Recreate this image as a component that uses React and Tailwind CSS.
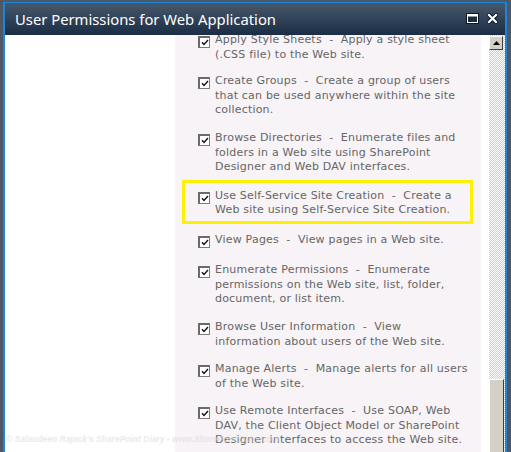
import React from "react";

const items = [
  { lines: ["Apply Style Sheets\u00a0\u00a0-\u00a0\u00a0Apply a style sheet", "(.CSS file) to the Web site."], mt: "mt-0" },
  { lines: ["Create Groups\u00a0\u00a0-\u00a0\u00a0Create a group of users", "that can be used anywhere within the site", "collection."], mt: "mt-[12px]" },
  { lines: ["Browse Directories\u00a0\u00a0-\u00a0\u00a0Enumerate files and", "folders in a Web site using SharePoint", "Designer and Web DAV interfaces."], mt: "mt-[13.5px]" },
  { lines: ["Use Self-Service Site Creation\u00a0\u00a0-\u00a0\u00a0Create a", "Web site using Self-Service Site Creation."], highlight: true },
  { lines: ["View Pages\u00a0\u00a0-\u00a0\u00a0View pages in a Web site."], mt: "mt-[9px]" },
  { lines: ["Enumerate Permissions\u00a0\u00a0-\u00a0\u00a0Enumerate", "permissions on the Web site, list, folder,", "document, or list item."], mt: "mt-[15.5px]" },
  { lines: ["Browse User Information\u00a0\u00a0-\u00a0\u00a0View", "information about users of the Web site."], mt: "mt-[13.5px]" },
  { lines: ["Manage Alerts\u00a0\u00a0-\u00a0\u00a0Manage alerts for all users", "of the Web site."], mt: "mt-[13px]" },
  { lines: ["Use Remote Interfaces\u00a0\u00a0-\u00a0\u00a0Use SOAP, Web", "DAV, the Client Object Model or SharePoint", "Designer interfaces to access the Web site."], mt: "mt-[13px]" },
];

function CheckBox() {
  return (
    <span className="mt-[3px] flex h-[12px] w-[12px] shrink-0 items-center justify-center border border-[#7c7c7c] border-l-2 border-t-2 border-l-[#6a6a6a] border-t-[#6a6a6a] bg-white">
      <svg width="8" height="7" viewBox="0 0 8 7">
        <path d="M1 3.2 L3 5.4 L7 1" fill="none" stroke="#111" strokeWidth="1.4" />
      </svg>
    </span>
  );
}

function Item({ lines }) {
  return (
    <div className="flex gap-[5px]">
      <CheckBox />
      <div className="flex flex-col">
        {lines.map((l, i) => (
          <span key={i} className="block whitespace-nowrap">{l}</span>
        ))}
      </div>
    </div>
  );
}

export default function App() {
  return (
    <div className="relative h-[452px] w-[511px] overflow-hidden bg-[#4d5765] pl-[3px] pr-[4px] pt-[2px]">
      <div className="flex h-[460px] flex-col border-l-2 border-r-2 border-t border-[#1b86d8] bg-white">
        {/* title bar */}
        <div className="flex h-[32px] shrink-0 items-center justify-between bg-gradient-to-b from-[#48596d] to-[#1b2d44] pl-[10px] pr-[7px]">
          <span
            className="pt-[1px] text-[14.8px] text-white"
            style={{ fontFamily: '"Noto Sans", "DejaVu Sans", sans-serif' }}
          >
            User Permissions for Web Application
          </span>
          <div className="flex items-center gap-[8px] pb-[2px]">
            <svg width="13" height="11" viewBox="0 0 13 11">
              <rect x="0.5" y="0.5" width="12" height="10" fill="#1b2b3f" stroke="#0d1522" />
              <rect x="1.5" y="1.5" width="10" height="8" fill="none" stroke="#fff" strokeWidth="1" />
              <rect x="1.5" y="1.5" width="10" height="2" fill="#fff" />
            </svg>
            <svg width="11" height="11" viewBox="0 0 11 11">
              <path d="M2 2 L9 9 M9 2 L2 9" stroke="#0d1522" strokeWidth="4" strokeLinecap="square" />
              <path d="M2 2 L9 9 M9 2 L2 9" stroke="#fff" strokeWidth="2.2" strokeLinecap="square" />
            </svg>
          </div>
        </div>
        {/* content */}
        <div className="flex min-h-0 flex-1">
          <div className="w-[170px] shrink-0 bg-white" />
          <div
            className="w-[306px] shrink-0 overflow-hidden bg-[#f7f3f6] pl-[23px] text-[11px] leading-[14.5px] tracking-[0.2px] text-[#666]"
            style={{ fontFamily: '"DejaVu Sans", Verdana, sans-serif' }}
          >
            <div className="-mt-[2px] flex flex-col">
              {items.map((it, i) =>
                it.highlight ? (
                  <div
                    key={i}
                    className="-ml-[16px] mt-[5px] w-[291px] border-[3px] border-[#ffef00] pb-[3px] pl-[13px] pt-[6px]"
                  >
                    <Item lines={it.lines} />
                  </div>
                ) : (
                  <div key={i} className={it.mt}>
                    <Item lines={it.lines} />
                  </div>
                )
              )}
            </div>
          </div>
          <div className="w-[8px] shrink-0 bg-white" />
          {/* scrollbar */}
          <div className="flex w-[16px] shrink-0 flex-col bg-[repeating-conic-gradient(#cdcdcd_0%_25%,#ffffff_0%_50%)] bg-[length:2px_2px]">
            <div className="mt-[1px] flex h-[14px] w-[14px] items-center justify-center border border-b-[#404040] border-l-white border-r-[#404040] border-t-white bg-[#d4d0c8]">
              <svg width="7" height="4" viewBox="0 0 7 4">
                <path d="M3.5 0 L7 4 L0 4 Z" fill="#000" />
              </svg>
            </div>
            <div className="mt-auto h-[83px] w-[15px] border border-b-[#404040] border-l-white border-r-[#404040] border-t-white bg-[#d4d0c8]" />
          </div>
        </div>
      </div>
      <div
        className="pointer-events-none absolute bottom-[6px] left-[6px] text-[8.5px] font-bold italic text-[#dcdcdc] opacity-60"
        style={{ fontFamily: '"Liberation Sans", Arial, sans-serif' }}
      >
        © Salaudeen Rajack's SharePoint Diary - www.SharePointDiary.com
      </div>
    </div>
  );
}
